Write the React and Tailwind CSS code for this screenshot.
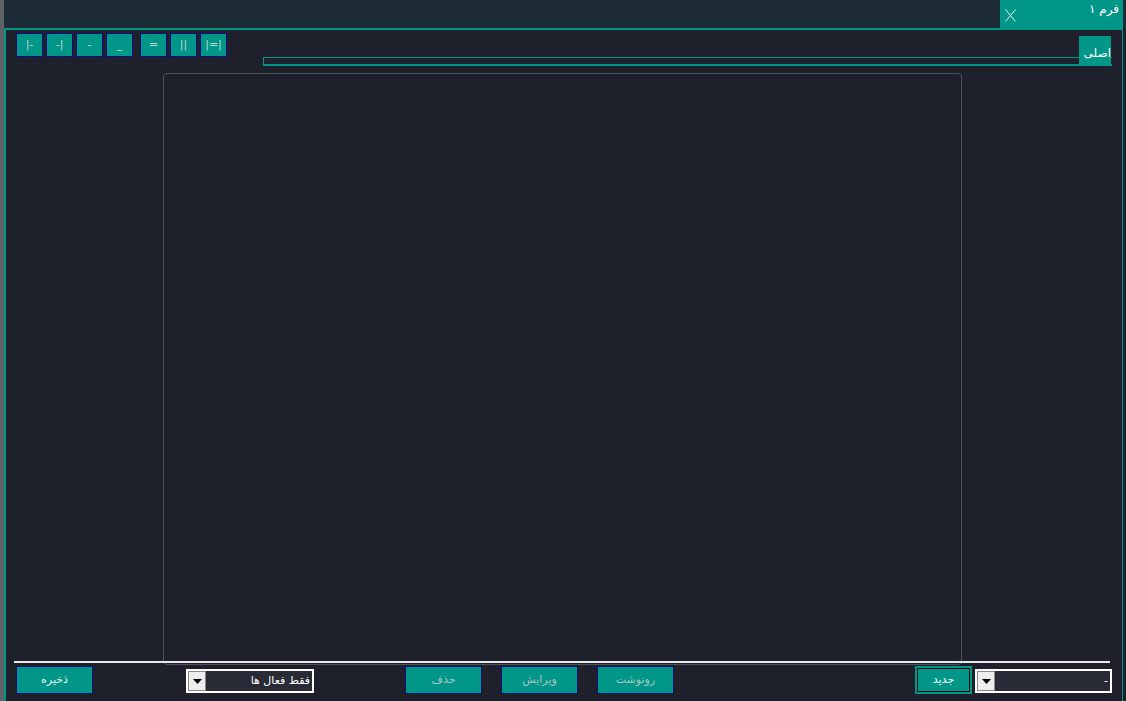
import React from 'react'

const ar = { fontFamily: '"DejaVu Sans", "Noto Sans", sans-serif' }

const topButtons = [
  { label: '|-', ml: 'ml-[10px]' },
  { label: '-|', ml: 'ml-[3px]' },
  { label: '-', ml: 'ml-[3px]' },
  { label: '_', ml: 'ml-[3px]' },
  { label: '=', ml: 'ml-[7px]' },
  { label: '||', ml: 'ml-[3px]' },
  { label: '|=|', ml: 'ml-[3px]' },
]

function Dropdown({ text, width }) {
  return (
    <div className={`${width} h-[24px] mt-[3px] flex border-2 border-white bg-white`}>
      <div className="w-[18px] h-full bg-[#ededed] border border-[#8a8a8a] flex items-center justify-center">
        <svg width="9" height="5" viewBox="0 0 9 5">
          <path d="M0 0 L9 0 L4.5 5 Z" fill="#000" />
        </svg>
      </div>
      <div
        className="flex-1 h-full bg-[#282b36] flex items-center justify-end pr-[2px] text-white text-[11px]"
        style={ar}
      >
        {text}
      </div>
    </div>
  )
}

function ActionButton({ label, ml, light }) {
  return (
    <div
      className={`${ml} w-[77px] h-[28px] bg-[#009688] border border-[#0b0b7a] flex items-center justify-center text-[11px] ${light ? 'text-[#e6f2f0]' : 'text-[#a9c7c3]'}`}
      style={ar}
    >
      {label}
    </div>
  )
}

export default function App() {
  return (
    <div className="w-[1126px] h-[701px] flex overflow-hidden bg-[#1e212b]">
      <div className="w-[4px] h-full bg-[#5e6268]" />
      <div className="flex-1 flex flex-col">
        {/* title strip */}
        <div className="h-[28px] flex bg-[#1c2b36]">
          <div className="flex-1" />
          <div className="w-[123px] h-full bg-[#009688] flex">
            <svg className="ml-[5px] mt-[9px]" width="11" height="13" viewBox="0 0 11 13">
              <path d="M0.5 0.5 L10.5 12.5 M10.5 0.5 L0.5 12.5" stroke="#e8f4f2" strokeWidth="1" fill="none" />
            </svg>
            <div className="ml-auto mr-[4px] mt-[1px] text-white text-[12px] leading-[16px]" style={ar}>
              فرم ۱
            </div>
          </div>
          <div className="w-[3px] bg-[#1c2b36]" />
        </div>

        {/* main panel */}
        <div className="flex-1 flex flex-col border-t-2 border-l-2 border-r border-[#009688] mr-[3px]">
          <div className="h-[43px] flex">
            {topButtons.map((b) => (
              <div
                key={b.label}
                className={`${b.ml} mt-[3px] w-[27px] h-[24px] bg-[#009688] border border-[#0b0b86] flex items-center justify-center text-[11px] text-[#c9d3d2]`}
                style={ar}
              >
                {b.label}
              </div>
            ))}
            <div className="flex-1 flex items-start ml-[36px] mr-[10px]">
              <div className="flex-1 h-[9px] mt-[27px] border-t border-l border-b-2 border-[#009688]" />
              <div
                className="w-[32px] h-[30px] mt-[6px] -ml-[33px] mr-[1px] bg-[#009688] flex items-end justify-end pb-[6px] text-white text-[12px] leading-[14px]"
                style={ar}
              >
                اصلی
              </div>
            </div>
          </div>

          <div className="h-[592px] w-[799px] ml-[157px] border border-[#4c535c] rounded-[4px]" />

          <div className="-mt-[4px] ml-[8px] w-[1096px] h-[2px] bg-[#e4e6e8]" />

          <div className="flex mt-[3px]">
            <ActionButton label="ذخیره" ml="ml-[10px]" light />
            <div className="ml-[93px]">
              <Dropdown text="فقط فعال ها" width="w-[128px]" />
            </div>
            <ActionButton label="حذف" ml="ml-[91px]" />
            <ActionButton label="ویرایش" ml="ml-[19px]" />
            <ActionButton label="رونوشت" ml="ml-[19px]" />
            <div className="ml-[241px] w-[57px] h-[28px] border-2 border-[#009688] bg-[#009688]">
              <div className="w-full h-full border border-[#0a0a0a] flex items-center justify-center text-white text-[11px]" style={ar}>
                جدید
              </div>
            </div>
            <div className="ml-[3px]">
              <Dropdown text="-" width="w-[137px]" />
            </div>
          </div>
        </div>
      </div>
    </div>
  )
}
